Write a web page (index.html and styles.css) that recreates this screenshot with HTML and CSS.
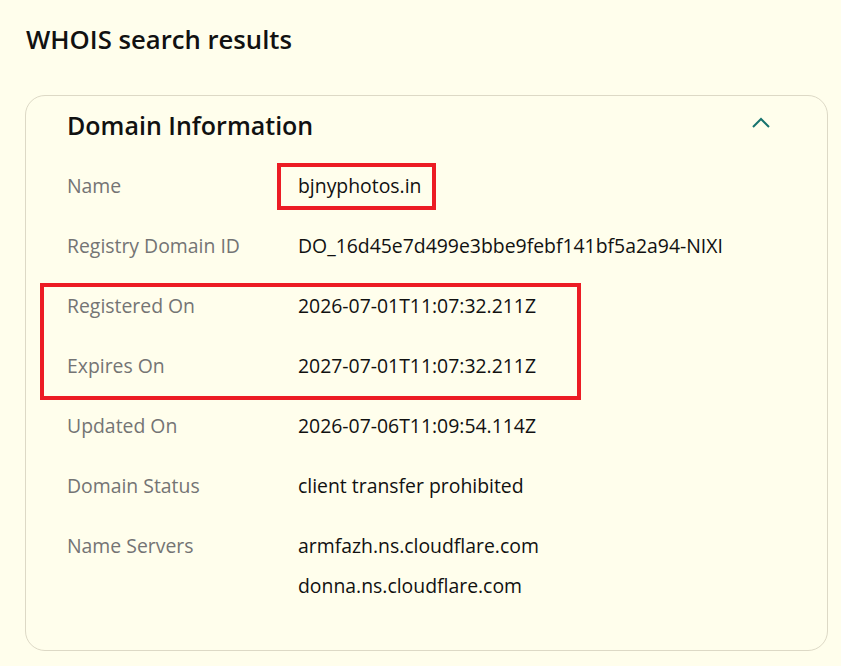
FILE: index.html
```html
<!DOCTYPE html>
<html lang="en">
<head>
<meta charset="utf-8">
<title>WHOIS search results</title>
<link rel="stylesheet" href="styles.css">
</head>
<body>
<main class="page">
  <h1 class="page-title">WHOIS search results</h1>
  <section class="card">
    <header class="card-head">
      <h2 class="card-title">Domain Information</h2>
      <button class="toggle" aria-label="Collapse">
        <svg width="18" height="11" viewBox="0 0 18 11" aria-hidden="true"><path d="M1 10 L9 2 L17 10" fill="none" stroke="#17736e" stroke-width="2"/></svg>
      </button>
    </header>
    <dl class="info">
      <div class="row"><dt>Name</dt><dd>bjnyphotos.in</dd></div>
      <div class="row"><dt>Registry Domain ID</dt><dd>DO_16d45e7d499e3bbe9febf141bf5a2a94-NIXI</dd></div>
      <div class="row"><dt>Registered On</dt><dd>2026-07-01T11:07:32.211Z</dd></div>
      <div class="row"><dt>Expires On</dt><dd>2027-07-01T11:07:32.211Z</dd></div>
      <div class="row"><dt>Updated On</dt><dd>2026-07-06T11:09:54.114Z</dd></div>
      <div class="row"><dt>Domain Status</dt><dd>client transfer prohibited</dd></div>
      <div class="row"><dt>Name Servers</dt><dd class="list"><span>armfazh.ns.cloudflare.com</span><span>donna.ns.cloudflare.com</span></dd></div>
    </dl>
  </section>
  <div class="mark mark-name"></div>
  <div class="mark mark-dates"></div>
</main>
</body>
</html>
```

FILE: styles.css
```css
* { box-sizing: border-box; }

html, body {
  margin: 0;
  background: #fffeec;
}

body {
  font-family: "Open Sans", Lato, Arial, sans-serif;
  color: #111111;
}

.page {
  position: relative;
  padding: 22px 13px 0 25px;
}

.page-title {
  margin: 0 0 0 1px;
  font-size: 25.7px;
  line-height: 36px;
  font-weight: 600;
}

.card {
  margin-top: 37px;
  border: 1px solid #ddd9c6;
  border-radius: 20px;
  padding: 0 42px 34px 41px;
}

.card-head {
  height: 60px;
  display: flex;
  align-items: center;
  justify-content: space-between;
  padding-right: 15px;
}

.card-title {
  margin: 0 0 3px;
  font-size: 25px;
  font-weight: 600;
  line-height: 32px;
}

.toggle {
  border: 0;
  background: none;
  padding: 0;
  margin-bottom: 8px;
  display: flex;
  cursor: pointer;
}

.info { margin: 0; }

.row {
  display: flex;
  padding: 18px 0;
  font-size: 19.4px;
  line-height: 24px;
}

.row dt {
  width: 231px;
  flex: none;
  color: #747474;
}

.row dd { margin: 0; }

.list {
  display: flex;
  flex-direction: column;
  gap: 16px;
}

/* red highlight frames drawn over the rows */
.mark {
  position: absolute;
  border: 4px solid #ec1c24;
  pointer-events: none;
}

.mark-name {
  left: 277px;
  top: 163px;
  width: 159px;
  height: 47px;
}

.mark-dates {
  left: 40px;
  top: 283px;
  width: 541px;
  height: 117px;
}
```
